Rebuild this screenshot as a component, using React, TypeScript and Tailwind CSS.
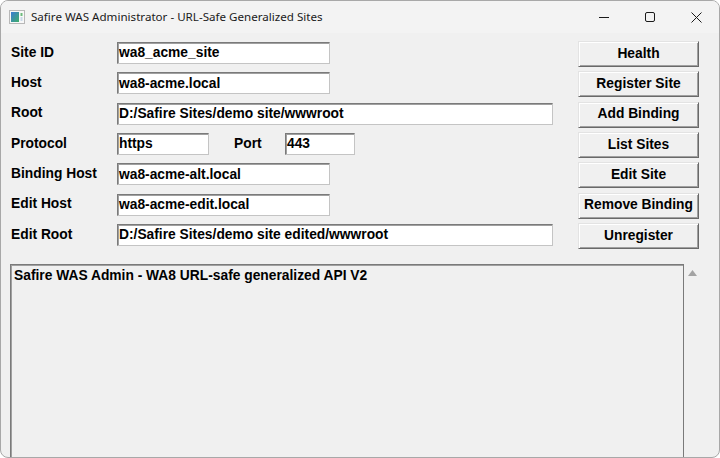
import React from "react";

const font = { fontFamily: '"Liberation Sans", Arial, sans-serif' };

function Field({ w, value }: { w: string; value: string }) {
  return (
    <div
      className={`${w} h-[22px] bg-white border border-t-[#7a7a7a] border-l-[#7a7a7a] border-b-[#c4c4c4] border-r-[#c4c4c4] shadow-[inset_1px_1px_0_#a0a0a0] flex items-center pl-[1px] text-[13.8px] font-bold text-black leading-none whitespace-nowrap overflow-hidden`}
    >
      {value}
    </div>
  );
}

function Row({ label, children }: { label: string; children: React.ReactNode }) {
  return (
    <div className="h-[30.33px] flex items-center">
      <div className="w-[106px] text-[13.8px] font-bold text-black">{label}</div>
      {children}
    </div>
  );
}

function Btn({ label }: { label: string }) {
  return (
    <div className="h-[30.33px] flex items-center">
      <div className="w-[121px] h-[26px] bg-[#f0f0f0] border border-t-[#e3e3e3] border-l-[#e3e3e3] border-b-[#696969] border-r-[#696969] shadow-[inset_1px_1px_0_#ffffff,inset_-1px_-1px_0_#a0a0a0] flex items-center justify-center text-[13.8px] font-bold text-black">
        {label}
      </div>
    </div>
  );
}

export default function App() {
  return (
    <div
      className="w-[720px] h-[458px] overflow-hidden rounded-[8px] border border-[#a8a8a8] bg-[#f0f0f0] flex flex-col"
      style={font}
    >
      {/* title bar */}
      <div className="h-[32px] shrink-0 bg-[#f3f3f3] flex items-center">
        <svg className="ml-[8px]" width="16" height="14" viewBox="0 0 16 14">
          <rect x="0.5" y="0.5" width="15" height="13" fill="#f8f8f8" stroke="#b8b8b8" />
          <defs>
            <linearGradient id="g" x1="0" y1="0" x2="1" y2="1">
              <stop offset="0" stopColor="#3a7bd5" />
              <stop offset="1" stopColor="#3fae6a" />
            </linearGradient>
          </defs>
          <rect x="2" y="2" width="8" height="10" fill="url(#g)" />
          <rect x="11.5" y="3" width="2" height="3" fill="#6dbb7c" />
          <rect x="11.5" y="7" width="2" height="4" fill="#c9d9e9" />
        </svg>
        <div
          className="ml-[6px] text-[11.6px] text-[#1a1a1a]"
          style={{ fontFamily: '"Noto Sans", "Open Sans", sans-serif' }}
        >
          Safire WAS Administrator - URL-Safe Generalized Sites
        </div>
        <div className="ml-auto flex items-center h-full">
          <div className="w-[46px] h-full flex items-center justify-center">
            <svg width="10" height="10" viewBox="0 0 10 10">
              <line x1="0" y1="5.5" x2="10" y2="5.5" stroke="#1a1a1a" strokeWidth="1" />
            </svg>
          </div>
          <div className="w-[46px] h-full flex items-center justify-center">
            <svg width="10" height="10" viewBox="0 0 10 10">
              <rect x="0.5" y="0.5" width="9" height="9" rx="1.5" fill="none" stroke="#1a1a1a" strokeWidth="1" />
            </svg>
          </div>
          <div className="w-[46px] h-full flex items-center justify-center">
            <svg width="11" height="11" viewBox="0 0 11 11">
              <path d="M0.5 0.5 L10.5 10.5 M10.5 0.5 L0.5 10.5" stroke="#1a1a1a" strokeWidth="1" />
            </svg>
          </div>
        </div>
      </div>

      {/* content */}
      <div className="flex-1 flex flex-col pl-[9px] pt-[5px] min-h-0">
        <div className="flex pl-[1px]">
          <div className="w-[543px] flex flex-col">
            <Row label="Site ID">
              <Field w="w-[213px]" value="wa8_acme_site" />
            </Row>
            <Row label="Host">
              <Field w="w-[213px]" value="wa8-acme.local" />
            </Row>
            <Row label="Root">
              <Field w="w-[436px]" value="D:/Safire Sites/demo site/wwwroot" />
            </Row>
            <Row label="Protocol">
              <Field w="w-[92px]" value="https" />
              <div className="ml-[25px] w-[51px] text-[13.8px] font-bold text-black">Port</div>
              <Field w="w-[70px]" value="443" />
            </Row>
            <Row label="Binding Host">
              <Field w="w-[213px]" value="wa8-acme-alt.local" />
            </Row>
            <Row label="Edit Host">
              <Field w="w-[213px]" value="wa8-acme-edit.local" />
            </Row>
            <Row label="Edit Root">
              <Field w="w-[436px]" value="D:/Safire Sites/demo site edited/wwwroot" />
            </Row>
          </div>
          <div className="ml-[24px] flex flex-col pt-[1px]">
            <Btn label="Health" />
            <Btn label="Register Site" />
            <Btn label="Add Binding" />
            <Btn label="List Sites" />
            <Btn label="Edit Site" />
            <Btn label="Remove Binding" />
            <Btn label="Unregister" />
          </div>
        </div>

        <div className="mt-[13px] flex flex-1 min-h-0">
          <div className="w-[674px] h-[220px] border border-[#7a7a7a] shadow-[inset_1px_1px_0_#a0a0a0] bg-[#f0f0f0] pl-[3px] pt-[1px] text-[13.8px] font-bold text-black">
            Safire WAS Admin - WA8 URL-safe generalized API V2
          </div>
          <div className="w-[17px] flex justify-center pt-[6px]">
            <svg width="9" height="6" viewBox="0 0 9 6">
              <path d="M0 6 L4.5 0 L9 6 Z" fill="#a3a3a3" />
            </svg>
          </div>
        </div>
      </div>
    </div>
  );
}
